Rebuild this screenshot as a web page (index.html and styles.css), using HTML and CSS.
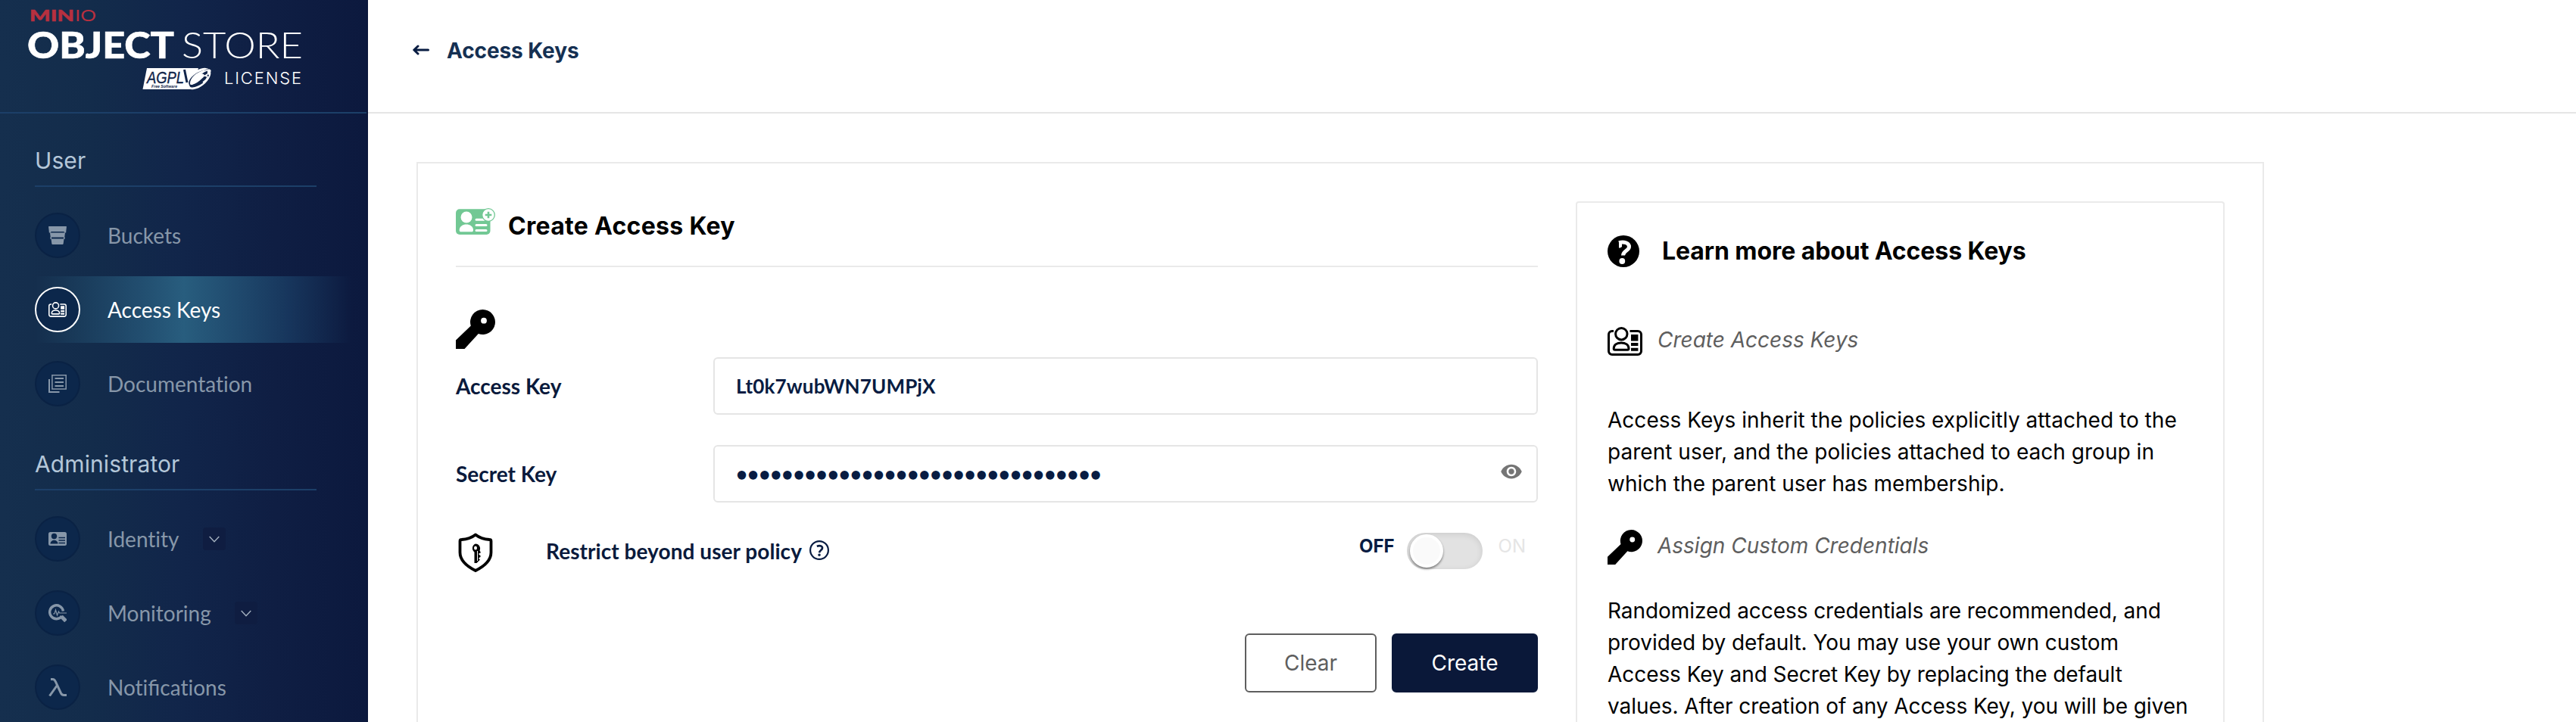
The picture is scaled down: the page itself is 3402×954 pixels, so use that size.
FILE: index.html
```html
<!DOCTYPE html>
<html lang="en">
<head>
<meta charset="utf-8">
<title>Access Keys</title>
<link rel="stylesheet" href="styles.css">
</head>
<body>
<svg width="0" height="0" class="defs">
  <symbol id="key" viewBox="0 0 52 52">
    <path fill-rule="evenodd" d="M35.5 0a16.5 16.5 0 1 1-5.7 32L11.5 52H0V40.500L19.800 21.500A16.500 16.500 0 0 1 35.500 0zM37 10.800a3.900 3.900 0 1 0 0 7.800a3.900 3.900 0 0 0 0-7.800z" fill="currentColor"/>
  </symbol>
  <symbol id="idcard" viewBox="0 0 46 38">
    <g fill="none" stroke="currentColor" stroke-width="3">
      <path d="M8 5.500H6A4.500 4.500 0 0 0 1.500 10V32A4.500 4.500 0 0 0 6 36.500H40A4.500 4.500 0 0 0 44.500 32V10A4.500 4.500 0 0 0 40 5.500H29.500"/>
      <circle cx="18.300" cy="9.200" r="7.700"/>
      <path d="M8.200 28.500c0-4.500 4-7.500 9.900-7.500s9.900 3 9.900 7.500c0 1-.8 1.700-1.700 1.700H9.900c-1 0-1.700-.7-1.700-1.700z"/>
    </g>
    <path d="M31 10h9.400v8.400H31zM31 21h9.400v4H31zM31 27.700h9.400v4H31z" fill="currentColor"/>
  </symbol>
</svg>
<div class="app">
  <aside class="sidebar">
    <div class="brand">
      <svg width="420" height="148" viewBox="0 0 420 148">
        <g class="minio">
          <text class="heavy" x="39" y="28" font-size="21" textLength="59" lengthAdjust="spacingAndGlyphs">MIN</text>
          <text class="light-red" x="99" y="28" font-size="21" textLength="28" lengthAdjust="spacingAndGlyphs">IO</text>
        </g>
        <text class="object" x="36" y="77" font-size="48" textLength="194" lengthAdjust="spacingAndGlyphs">OBJECT</text>
        <text class="store" x="240" y="77" font-size="48" textLength="160" lengthAdjust="spacingAndGlyphs">STORE</text>
        <path d="M194 90H262L254 118H188.500z" fill="#fff"/>
        <ellipse cx="262" cy="104" rx="19" ry="10.500" transform="rotate(-38 262 104)" fill="#fff"/>
        <path d="M250 112.500c-4-7 8-19 27-21.500-5 3-3 6-1 8.500-3 8-14 16-23 16-1.500 0-2.500-1-3-3z" fill="#11254a"/>
        <path d="M251 110c0-7 8-15 21-18-2 2-5 4-8 5.500 6-.5 8 1.500 3 6-5 5-11 8.500-15 8.500-.6 0-1-.9-1-2z" fill="#fff"/>
        <path d="M262 100c5-4 11-8 14.500-7.500s-1 5-5.500 7.500c5 0 3 5-3 9" fill="none" stroke="#fff" stroke-width="1.800"/>
        <path d="M243.500 92l3.500 17" stroke="#11254a" stroke-width="3"/>
        <text class="agpl" x="194" y="110" font-size="22" textLength="49" lengthAdjust="spacingAndGlyphs">AGPL</text>
        <text class="free" x="200" y="116" font-size="5.500" textLength="34" lengthAdjust="spacingAndGlyphs">Free Software</text>
        <text class="license" x="296" y="111" font-size="22" textLength="102">LICENSE</text>
      </svg>
    </div>
    <section class="group">
      <h2 class="group-title">User</h2>
      <ul class="menu">
        <li class="item"><span class="bubble"><svg width="24" height="24" viewBox="0 0 24 24" fill="currentColor"><path d="M1 0h22c.7 0 1 .4.900 1L23.200 7H.800L.100 1C0 .4.300 0 1 0zM2 8.500h20L21.200 14.500H2.800zM3.500 16.500h17L19.700 22.800c-.1.800-.6 1.200-1.400 1.200H5.700c-.8 0-1.300-.4-1.400-1.200z"/><path d="M.8 6.500h2.500v2h-2.500zM20.700 6.500h2.500v2h-2.500zM2.500 14h1.500v3h-1.500zM20 14h1.500v3h-1.500z"/></svg></span><span>Buckets</span></li>
        <li class="item active"><span class="bubble"><svg width="24" height="20"><use href="#idcard"/></svg></span><span>Access Keys</span></li>
        <li class="item"><span class="bubble"><svg width="24" height="24" viewBox="0 0 24 24" fill="none" stroke="currentColor"><path stroke-width="1.500" d="M4.900.8h18.300v18.300H4.900z"/><path stroke-width="2" d="M8.500 5h11.500M8.500 10h11.500M8.500 15h11.500"/><path stroke-width="2" d="M1 6v17h13.500"/></svg></span><span>Documentation</span></li>
      </ul>
    </section>
    <section class="group">
      <h2 class="group-title">Administrator</h2>
      <ul class="menu">
        <li class="item"><span class="bubble"><svg width="24" height="18" viewBox="0 0 24 18"><rect width="24" height="18" rx="2.500" fill="currentColor"/><g fill="#0c274b"><circle cx="7.500" cy="5.500" r="3.700"/><path d="M2.500 15.500c0-6.500 10-6.500 10 0z"/></g><path d="M13.500 7.500H22M13.500 11H22M13.500 14.500H22" stroke="#0c274b" stroke-width="1.300"/></svg></span><span>Identity</span><span class="toggle"><svg width="14" height="9" viewBox="0 0 14 9"><path d="M.7 1L7 7.700L13.300 1"/></svg></span></li>
        <li class="item"><span class="bubble"><svg width="24" height="24" viewBox="0 0 24 24" fill="none" stroke="currentColor"><path stroke-width="3.400" d="M19.400 9.500a8.900 8.900 0 1 0-1.600 6.500"/><path stroke-width="5" d="M17 16.500l6 6"/><path stroke-width="1.200" d="M6 13h2l1.500-5 2 7 2-5 1 2H24"/></svg></span><span>Monitoring</span><span class="toggle"><svg width="14" height="9" viewBox="0 0 14 9"><path d="M.7 1L7 7.700L13.300 1"/></svg></span></li>
        <li class="item"><span class="bubble"><svg width="24" height="24" viewBox="0 0 24 24" fill="none" stroke="currentColor" stroke-width="3"><path d="M3 1.600h2.500c2 0 3 1 4 3.400L16.500 20c1 2 2 2.500 4 2.500H24"/><path d="M11.500 9.500L1.500 23.500"/></svg></span><span>Noti<span class="lig">fi</span>cations</span></li>
      </ul>
    </section>
  </aside>
  <main class="main">
    <header class="topbar">
      <svg width="22" height="14" viewBox="0 0 22 14" fill="none" stroke="#081c42" stroke-width="3" stroke-linecap="round" stroke-linejoin="round"><path d="M20.500 7H2M7 2L1.800 7L7 12"/></svg>
      <h1 class="page-title">Access Keys</h1>
    </header>
    <div class="card">
      <section class="form">
        <div class="form-head">
          <svg width="52" height="36" viewBox="0 0 52 36"><rect y="1.300" width="45.500" height="33.700" rx="5" fill="#72c894"/><g fill="#fff"><circle cx="14" cy="12" r="7.500"/><path d="M4.700 29c0-10 18.300-10 18.300 0 0 1.500-.8 2.300-2 2.300H6.700c-1.200 0-2-.8-2-2.300z"/></g><path d="M27 15.300h10M27 22.500h13M27 29.500h13" stroke="#fff" stroke-width="3" stroke-linecap="round"/><circle cx="43" cy="9" r="8.300" fill="#fff" stroke="#72c894" stroke-width="1.300"/><path d="M43 4.700v8.600M38.700 9h8.600" stroke="#72c894" stroke-width="2.600"/></svg>
          <h2 class="form-title">Create Access Key</h2>
        </div>
        <svg class="form-key" width="52" height="52"><use href="#key"/></svg>
        <div class="field">
          <label class="label" for="ak">Access Key</label>
          <div class="box"><input id="ak" class="input spaced" type="text" value="Lt0k7wubWN7UMPjX"></div>
        </div>
        <div class="field">
          <label class="label" for="sk">Secret Key</label>
          <div class="box"><input id="sk" class="input" type="password" value="abcdefghijklmnopqrstuvwxyz012345"><svg class="eye" width="30" height="30" viewBox="0 0 24 24"><path d="M12 4.500C7 4.500 2.730 7.610 1 12c1.730 4.390 6 7.500 11 7.500s9.270-3.110 11-7.500c-1.730-4.390-6-7.500-11-7.500zM12 17c-2.760 0-5-2.240-5-5s2.240-5 5-5 5 2.240 5 5-2.240 5-5 5zm0-8c-1.660 0-3 1.340-3 3s1.340 3 3 3 3-1.340 3-3-1.340-3-3-3z" fill="#757575"/></svg></div>
        </div>
        <div class="restrict">
          <svg width="52" height="52" viewBox="0 0 52 52"><path d="M26 2.500c5 4 11 6 18.500 6.500 1.500 0 2 .500 2 2v15C46.500 36 38 44 26 50C14 44 5.500 36 5.500 26V11c0-1.500.500-2 2-2C15 8.500 21 6.500 26 2.500z" fill="none" stroke="#000" stroke-width="3.800" stroke-linejoin="round"/><path fill-rule="evenodd" d="M26 14.500a6.300 6.300 0 0 1 5.500 9L32.500 25v2h-2v2l2 1v2l-2 1v1.500l1.500 1-1.500 1.500-3 3h-3V25.500A6.300 6.300 0 0 1 26 14.500zM26 17.500a2 2.500 0 1 0 0 5a2 2.500 0 0 0 0-5z"/><path d="M28.500 24v13" stroke="#fff" stroke-width="1"/></svg>
          <span class="restrict-label">Restrict beyond user policy</span>
          <svg class="hint" width="26" height="26" viewBox="0 0 26 26" fill="none" stroke="#081c42"><circle cx="13" cy="13" r="11.900" stroke-width="2.200"/><path d="M9.800 7.700c5-1.600 8 .3 7 3.300-.7 2-3.300 2.200-3.800 5.200" stroke-width="2.600"/><circle cx="13" cy="19.300" r="1" stroke-width="1.600"/></svg>
          <div class="switch">
            <span class="off">OFF</span>
            <span class="track"><span class="thumb"></span></span>
            <span class="on">ON</span>
          </div>
        </div>
        <div class="actions">
          <button class="btn">Clear</button>
          <button class="btn primary">Create</button>
        </div>
      </section>
      <aside class="help">
        <div class="help-head">
          <svg width="42" height="42" viewBox="0 0 42 42"><circle cx="21" cy="21" r="21"/><path d="M15 9.700c7-1.900 13.500.3 13.500 5.300 0 5.500-8 5.200-8 11.500" fill="none" stroke="#fff" stroke-width="5"/><path d="M15 7v9.500c1.500.4 3-.5 4-1.500V8z" fill="#fff"/><circle cx="19.300" cy="34" r="3.900" fill="#fff"/></svg>
          <h2 class="form-title">Learn more about Access Keys</h2>
        </div>
        <div class="topic first"><svg width="46" height="38"><use href="#idcard"/></svg><em>Create Access Keys</em></div>
        <p class="para loose">Access Keys inherit the policies explicitly attached to the<br>parent user, and the policies attached to each group in<br>which the parent user has membership.</p>
        <div class="topic second"><svg width="46" height="46"><use href="#key"/></svg><em>Assign Custom Credentials</em></div>
        <p class="para tight">Randomized access credentials are recommended, and<br>provided by default. You may use your own custom<br>Access Key and Secret Key by replacing the default<br>values. After creation of any Access Key, you will be given</p>
      </aside>
    </div>
  </main>
</div>
</body>
</html>
```

FILE: styles.css
```css
* { box-sizing: border-box; }
html, body { margin: 0; height: 954px; overflow: hidden; }
body { font-family: Inter, sans-serif; font-size: 28px; color: #000; background: #fff; }
h1, h2, p, ul { margin: 0; padding: 0; }
svg { display: block; flex: none; }
.defs { position: absolute; }

.app { display: flex; height: 954px; overflow: hidden; }

.sidebar {
  flex: none; width: 486px; height: 954px; overflow: hidden;
  border-right: 2px solid #0b173b;
  background: linear-gradient(90deg, #152f4e 0%, #132c4b 25%, #11254a 50%, #0f1e43 75%, #0c193e 100%);
}
.brand { height: 150px; border-bottom: 2px solid #1c3f68; }
.heavy { font-family: Lato, sans-serif; font-weight: 900; fill: #b7303f; stroke: #b7303f; stroke-width: .5; }
.light-red { font-family: Lato, sans-serif; font-weight: 400; fill: #b7303f; }
.object { font-family: Lato, sans-serif; font-weight: 900; fill: #fff; stroke: #fff; stroke-width: .6; }
.store { font-family: Lato, sans-serif; font-weight: 300; fill: #fff; }
.license { font-family: Inter, sans-serif; font-weight: 300; fill: #fff; }
.agpl { font-family: "Liberation Sans", sans-serif; font-style: italic; fill: #11254a; stroke: #11254a; stroke-width: .4; }
.free { font-family: "Liberation Sans", sans-serif; font-style: italic; font-weight: 700; fill: #11254a; }

.group { padding-top: 45px; }
.group-title {
  margin-left: 46px; width: 372px; padding-bottom: 16px; border-bottom: 2px solid #1c3f68;
  font-size: 30px; line-height: 34px; font-weight: 400; color: #b4c7d9; letter-spacing: .1px;
}
.menu { list-style: none; margin: 20px 20px 0 46px; display: flex; flex-direction: column; gap: 10px; }
.item { display: flex; align-items: center; height: 88px; font-family: Lato, sans-serif; font-size: 28px; font-variant-ligatures: none; color: #8797a9; }
.lig { font-variant-ligatures: normal; }
.bubble {
  display: grid; place-items: center; width: 60px; height: 60px; margin-right: 36px;
  border: 2px solid #0a2244; border-radius: 50%; background: #0c274b;
}
.active { color: #fff; background: linear-gradient(90deg, rgba(40,93,126,0) 0%, #285d7e 47%, rgba(30,74,114,.55) 80%, rgba(30,74,114,0) 100%); }
.active .bubble { border-color: #fff; }
.toggle { display: grid; place-items: center; width: 30px; height: 30px; margin-left: 31px; border-radius: 4px; background: #0f1d41; }
.toggle path { fill: none; stroke: #a5b2c0; stroke-width: 1.4; }

.main { flex: 1; min-width: 0; }
.topbar { display: flex; align-items: flex-start; height: 150px; padding: 59px 0 0 59px; border-bottom: 2px solid #e5e5e5; }
.page-title { margin: -9px 0 0 23px; font-size: 28px; line-height: 34px; font-weight: 700; letter-spacing: -.1px; color: #153052; }
.card {
  display: flex; gap: 50px; width: 2440px; height: 740px; margin: 64px 0 0 64px; padding: 50px 50px 0;
  border: 2px solid #eaeaea; border-bottom: 0; overflow: hidden;
}
.form { width: 1429px; flex: none; }
.form-head { display: flex; height: 87px; padding-top: 9px; border-bottom: 2px solid #eaeaea; }
.form-head .form-title { margin: 4px 0 0 17px; letter-spacing: .3px; }
.form-title { font-size: 32px; line-height: 40px; font-weight: 700; }
.form-key { margin: 56px 0 11px; }
.field { display: flex; align-items: center; height: 76px; margin-bottom: 40px; }
.label { width: 340px; font-family: Lato, sans-serif; font-size: 28px; font-weight: 700; color: #0a1a3c; }
.box { display: flex; align-items: center; flex: 1; height: 76px; padding: 0 18px 0 28px; border: 2px solid #e5e5e5; border-radius: 6px; }
.input { flex: 1; min-width: 0; padding: 0; border: 0; outline: 0; background: none; font-family: Lato, sans-serif; font-size: 26px; font-weight: 700; color: #081c42; }
.spaced { letter-spacing: .15px; }
.eye { margin-top: -6px; }
.restrict { display: flex; height: 52px; }
.restrict-label { margin-left: 67px; font-family: Lato, sans-serif; font-size: 28px; line-height: 48px; font-weight: 700; letter-spacing: .06px; color: #0a1a3c; }
.hint { margin: 10px 0 0 10px; }
.switch { display: flex; margin-left: auto; padding-right: 16px; font-size: 24px; line-height: 35px; }
.off { font-weight: 700; color: #081c42; }
.track { display: block; width: 100px; height: 48px; margin: 0 21px 0 16px; padding: 2px 4px; border-radius: 24px; background: #e2e2e2; box-shadow: inset 0 2px 8px rgba(0,0,0,.1); }
.thumb { display: block; width: 44px; height: 44px; border: 4px solid #fff; border-radius: 50%; background: #fafafa; box-shadow: 0 2px 3px rgba(0,0,0,.45); }
.on { color: #e5e5e5; }
.actions { display: flex; justify-content: flex-end; gap: 20px; margin-top: 81px; }
.btn { width: 174px; height: 78px; padding: 0; border: 2px solid #5e5e5e; border-radius: 6px; background: #fff; font-family: Inter, sans-serif; font-size: 28px; color: #5e5e5e; }
.primary { width: 193px; border-color: #0a1839; background: #0a1839; color: #fff; }

.help { flex: 1; padding: 43px 0 0 40px; border: 2px solid #eaeaea; border-bottom: 0; border-radius: 4px 4px 0 0; }
.help-head { display: flex; height: 121px; }
.help-head .form-title { margin: 1px 0 0 30px; letter-spacing: -.08px; }
.topic { display: flex; color: #5e5e5e; line-height: 34px; }
.topic svg { color: #000; margin-right: 20px; }
.first { height: 102px; }
.second { height: 86px; margin-top: 40px; }
.second em { margin-top: 4px; }
.para { font-size: 28px; line-height: 42px; white-space: nowrap; }
.loose { letter-spacing: .03px; }
.tight { letter-spacing: -.06px; }
```
